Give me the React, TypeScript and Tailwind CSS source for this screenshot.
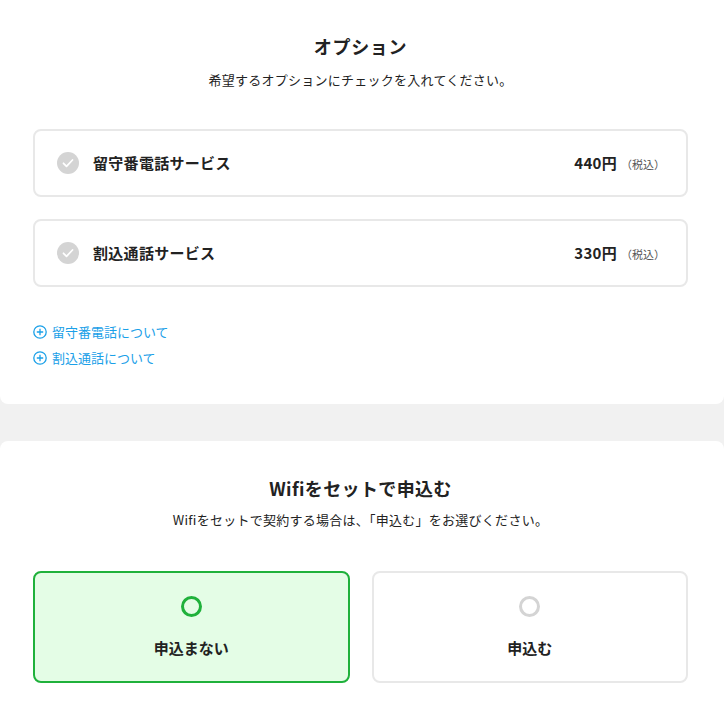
import { useState } from 'react';

const font = { fontFamily: '"Noto Sans CJK JP", "Noto Sans", sans-serif' };

const options = [
  { id: 'rusuban', name: '留守番電話サービス', price: '440円' },
  { id: 'warikomi', name: '割込通話サービス', price: '330円' },
];

const links = ['留守番電話について', '割込通話について'];

const CheckIcon = () => (
  <svg width="22" height="22" viewBox="0 0 22 22">
    <circle cx="11" cy="11" r="11" fill="#d4d4d4" />
    <path d="M6.5 11.3l3 3 6-6.3" fill="none" stroke="#fff" strokeWidth="1.8" strokeLinecap="round" strokeLinejoin="round" />
  </svg>
);

const PlusIcon = () => (
  <svg width="14" height="14" viewBox="0 0 14 14">
    <circle cx="7" cy="7" r="6.2" fill="none" stroke="#1aa0e8" strokeWidth="1.3" />
    <path d="M7 3.8v6.4M3.8 7h6.4" stroke="#1aa0e8" strokeWidth="1.3" />
  </svg>
);

export default function App() {
  const [wifi, setWifi] = useState<'no' | 'yes'>('no');

  return (
    <div className="min-h-screen bg-[#f1f1f1] text-[#222]" style={font}>
      <section className="bg-white rounded-b-lg pl-[33px] pr-[36px] pt-[33px] pb-[36px]">
        <h2 className="text-center text-[18px] font-bold leading-[26px] tracking-[0.04em]">オプション</h2>
        <p className="mt-[11px] text-center text-[13px] leading-[20px] tracking-[0.02em]">希望するオプションにチェックを入れてください。</p>

        <div className="mt-[39px] flex flex-col gap-[22px]">
          {options.map((o) => (
            <div
              key={o.id}
              className="h-[68px] flex items-center justify-between border-2 border-[#e8e8e8] rounded-lg pl-[22px] pr-[21px]"
            >
              <div className="flex items-center gap-[14px]">
                <CheckIcon />
                <span className="text-[15px] font-bold tracking-[0.02em]">{o.name}</span>
              </div>
              <div className="flex items-baseline">
                <span className="text-[15px] font-bold tracking-[0.02em]">{o.price}</span>
                <span className="text-[11px] text-[#555] ml-[4px]">（税込）</span>
              </div>
            </div>
          ))}
        </div>

        <ul className="mt-[35px] flex flex-col gap-[6px]">
          {links.map((l) => (
            <li key={l} className="flex items-center gap-[5px] text-[13px] leading-[20px] text-[#1aa0e8]">
              <PlusIcon />
              <span>{l}</span>
            </li>
          ))}
        </ul>
      </section>

      <section className="mt-[37px] bg-white rounded-t-lg pl-[33px] pr-[36px] pt-[34px] pb-[40px]">
        <h2 className="text-center text-[18px] font-bold leading-[26px] tracking-[0.02em]">Wifiをセットで申込む</h2>
        <p className="mt-[9px] text-center text-[13px] leading-[20px] tracking-[0.02em]">Wifiをセットで契約する場合は、「申込む」をお選びください。</p>

        <div className="mt-[41px] grid grid-cols-2 gap-[22px]">
          {[
            { key: 'no' as const, label: '申込まない' },
            { key: 'yes' as const, label: '申込む' },
          ].map((c) => {
            const active = wifi === c.key;
            return (
              <button
                key={c.key}
                onClick={() => setWifi(c.key)}
                className={
                  active
                    ? 'h-[112px] flex flex-col items-center justify-center rounded-lg border-2 border-[#1fb13b] bg-[#e4fde6]'
                    : 'h-[112px] flex flex-col items-center justify-center rounded-lg border-2 border-[#e8e8e8] bg-white'
                }
              >
                <span
                  className={
                    active
                      ? 'w-[21px] h-[21px] rounded-full border-[3px] border-[#1fb13b]'
                      : 'w-[21px] h-[21px] rounded-full border-[3px] border-[#d4d4d4]'
                  }
                />
                <span className="mt-[20px] text-[15px] font-bold leading-[22px]">{c.label}</span>
              </button>
            );
          })}
        </div>
      </section>
    </div>
  );
}
